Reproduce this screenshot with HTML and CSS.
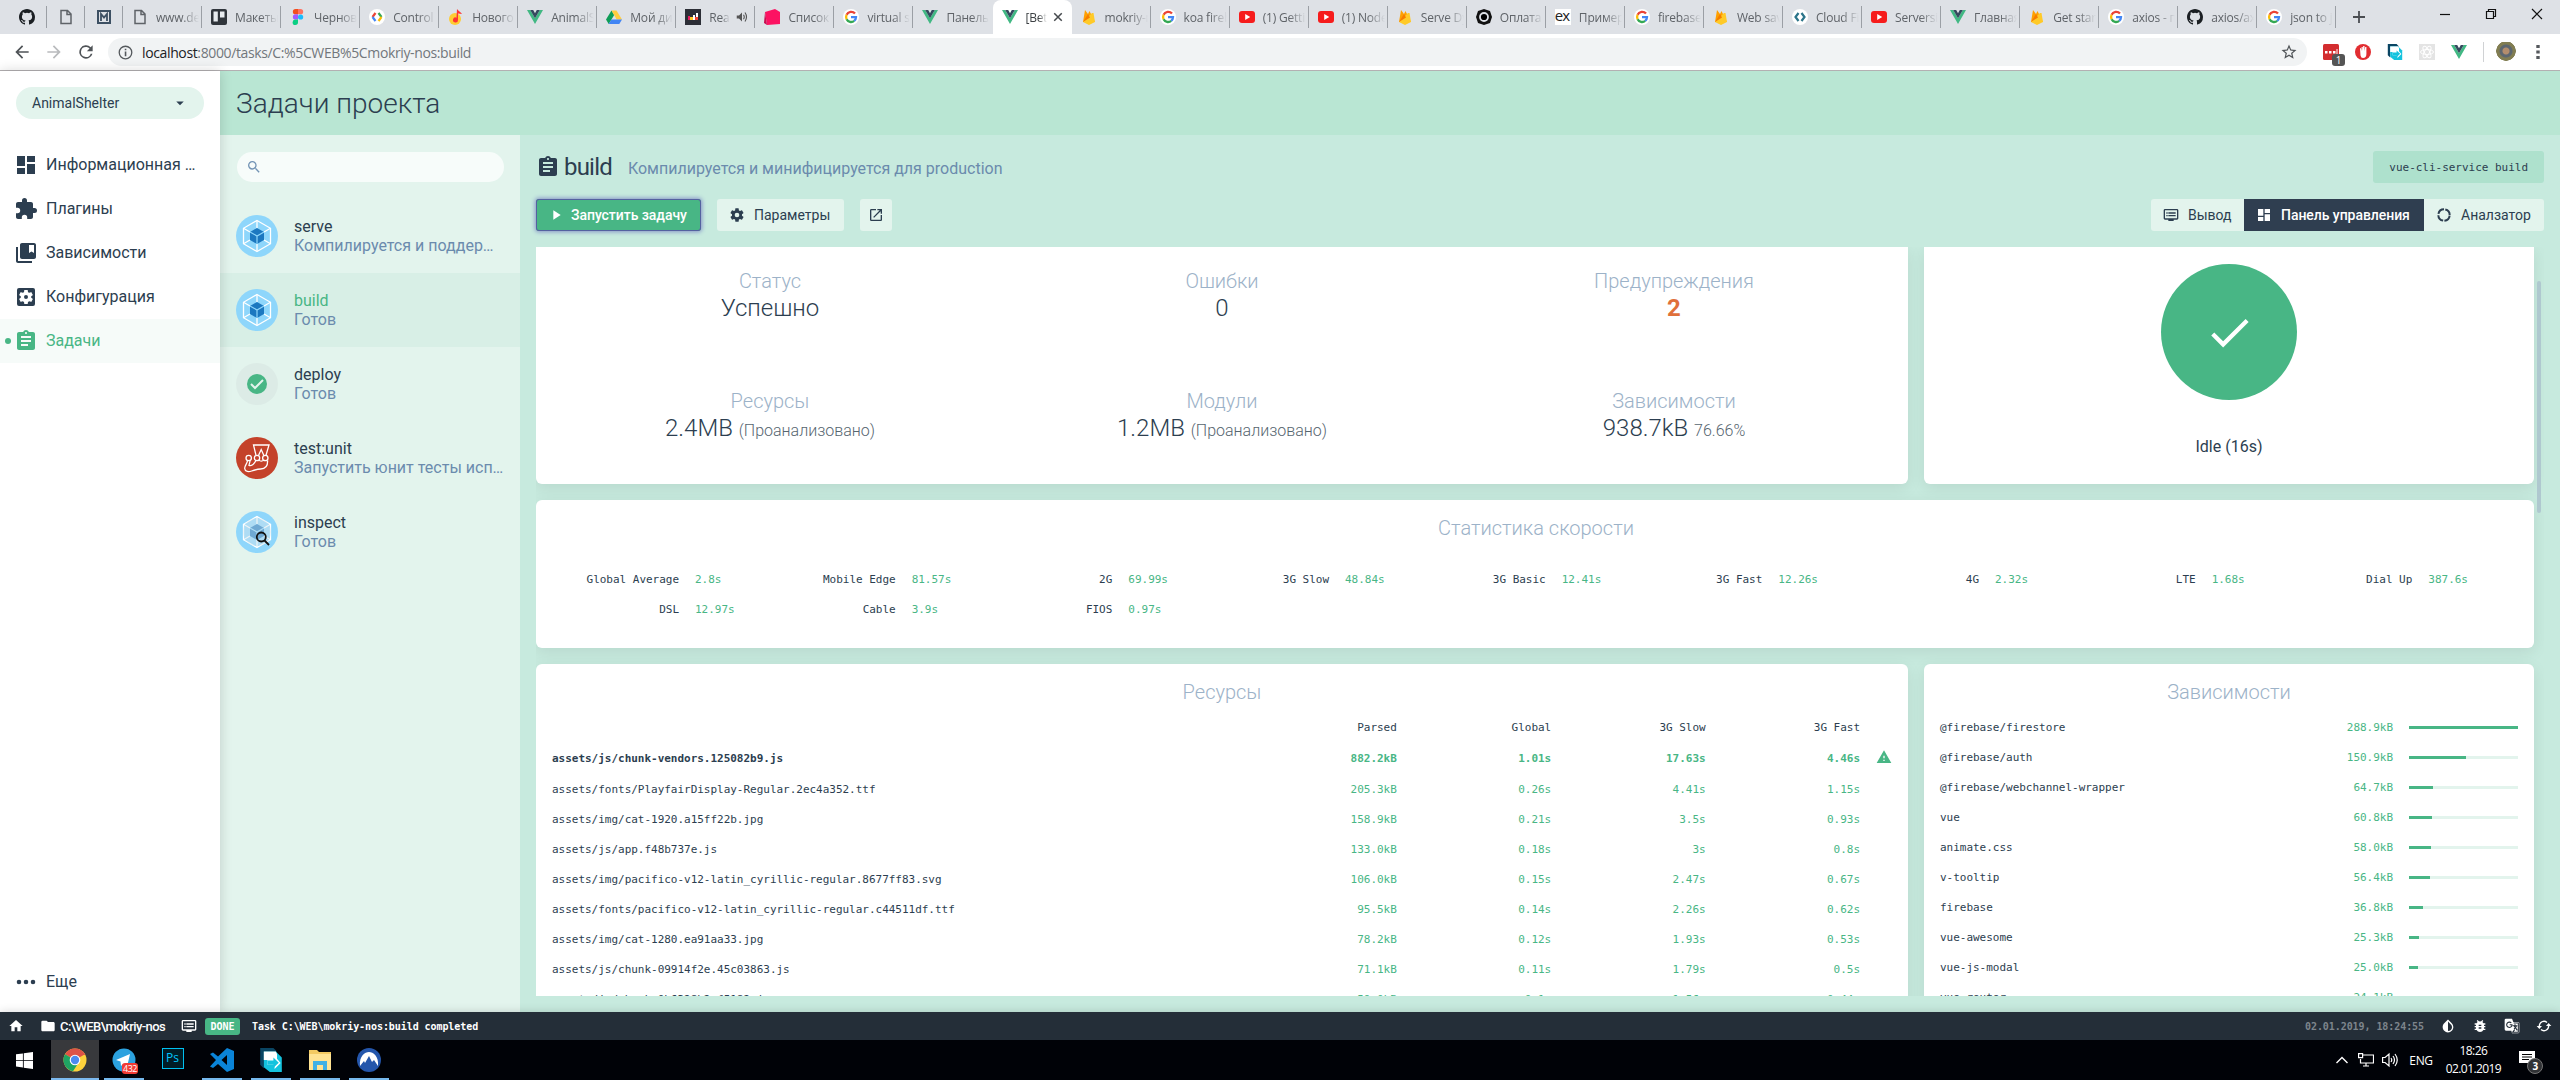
FILE: index.html
```html
<!DOCTYPE html>
<html lang="ru">
<head>
<meta charset="utf-8">
<title>[Beta] Vue CLI</title>
<link rel="stylesheet" href="styles.css">
</head>
<body>
<svg class="defs" width="0" height="0">
  <symbol id="github" viewBox="0 0 16 16"><path fill="#1b1f23" d="M8 0C3.58 0 0 3.58 0 8c0 3.54 2.29 6.53 5.47 7.59.4.07.55-.17.55-.38 0-.19-.01-.82-.01-1.49-2.01.37-2.53-.49-2.69-.94-.09-.23-.48-.94-.82-1.13-.28-.15-.68-.52-.01-.53.63-.01 1.08.58 1.23.82.72 1.21 1.87.87 2.33.66.07-.52.28-.87.51-1.07-1.78-.2-3.64-.89-3.64-3.95 0-.87.31-1.59.82-2.15-.08-.2-.36-1.02.08-2.12 0 0 .67-.21 2.2.82a7.7 7.7 0 0 1 4 0c1.53-1.04 2.2-.82 2.2-.82.44 1.1.16 1.92.08 2.12.51.56.82 1.27.82 2.15 0 3.07-1.87 3.75-3.65 3.95.29.25.54.73.54 1.48 0 1.07-.01 1.93-.01 2.2 0 .21.15.46.55.38A8 8 0 0 0 16 8c0-4.42-3.58-8-8-8z"/></symbol>
  <symbol id="doc" viewBox="0 0 16 16"><path fill="none" stroke="#5f6368" stroke-width="1.5" d="M3 1.5h6.5L13 5v9.5H3zM9 1.5V5.500h4"/></symbol>
  <symbol id="vue" viewBox="0 0 16 16"><path fill="#41b883" d="M0 1h3.200L8 9.300 12.800 1H16L8 15z"/><path fill="#35495e" d="M3.200 1h3L8 4.200 9.800 1h3L8 9.300z"/></symbol>
  <symbol id="google" viewBox="0 0 16 16"><circle cx="8" cy="8" r="8" fill="#fff"/><g fill="none" stroke-width="2.300"><path stroke="#ea4335" d="M12 4.600A5 5 0 0 0 3.600 5.800"/><path stroke="#fbbc05" d="M3.600 5.800a5 5 0 0 0 0 4.400"/><path stroke="#34a853" d="M3.600 10.200a5 5 0 0 0 7.600 1.700"/><path stroke="#4285f4" d="M11.200 11.900A5 5 0 0 0 13 8.200H8"/></g></symbol>
  <symbol id="fire" viewBox="0 0 16 16"><path fill="#ffa000" d="M2 13 4 1l3 4 1.500-3L14 13z"/><path fill="#ffca28" d="m2 13 9-9 1.500 0L14 13l-6 3z"/><path fill="#f57c00" d="M2 13 7 5l2 3.500z"/></symbol>
  <symbol id="youtube" viewBox="0 0 16 16"><rect y="2" width="16" height="12" rx="3" fill="#f61c1c"/><path fill="#fff" d="m6.200 5 5 3-5 3z"/></symbol>
  <symbol id="figma" viewBox="0 0 16 16"><path fill="#f24e1e" d="M8 0H5.500a2.600 2.600 0 0 0 0 5.300H8z"/><path fill="#ff7262" d="M8 0h2.500a2.600 2.600 0 0 1 0 5.300H8z"/><path fill="#a259ff" d="M8 5.300H5.500a2.600 2.600 0 0 0 0 5.300H8z"/><circle cx="10.600" cy="8" r="2.600" fill="#1abcfe"/><path fill="#0acf83" d="M8 10.600H5.500A2.700 2.700 0 1 0 8 13.300z"/></symbol>
  <symbol id="devs" viewBox="0 0 16 16"><circle cx="8" cy="8" r="8" fill="#fff"/><g fill="none" stroke-width="2.200"><path stroke="#ea4335" d="M6.500 4 3.500 8"/><path stroke="#4285f4" d="m3.500 8 3 4"/><path stroke="#34a853" d="m9.500 4 3 4"/><path stroke="#fbbc05" d="m12.500 8-3 4"/></g></symbol>
  <symbol id="cloud" viewBox="0 0 16 16"><circle cx="8" cy="8" r="8" fill="#fff"/><path fill="none" stroke="#2b7489" stroke-width="2.200" d="M6.500 4 3.500 8l3 4m3-8 3 4-3 4"/></symbol>
  <symbol id="dash" viewBox="0 0 24 24"><path fill="currentColor" d="M3 13h8V3H3v10zm0 8h8v-6H3v6zm10 0h8V11h-8v10zm0-18v6h8V3h-8z"/></symbol>
  <symbol id="clip" viewBox="0 0 24 24"><path fill="currentColor" d="M19 3h-4.180C14.400 1.840 13.300 1 12 1c-1.300 0-2.400.840-2.820 2H5c-1.100 0-2 .900-2 2v14c0 1.100.900 2 2 2h14c1.100 0 2-.900 2-2V5c0-1.100-.900-2-2-2zm-7 0c.550 0 1 .450 1 1s-.450 1-1 1-1-.450-1-1 .450-1 1-1zm2 14H7v-2h7v2zm3-4H7v-2h10v2zm0-4H7V7h10v2z"/></symbol>
  <symbol id="search" viewBox="0 0 24 24"><path fill="currentColor" d="M15.500 14h-.790l-.280-.270A6.471 6.471 0 0 0 16 9.500 6.500 6.500 0 1 0 9.500 16c1.610 0 3.090-.590 4.230-1.570l.270.280v.790l5 4.990L20.490 19l-4.990-5zm-6 0C7.010 14 5 11.990 5 9.500S7.010 5 9.500 5 14 7.010 14 9.500 11.990 14 9.500 14z"/></symbol>
  <symbol id="log" viewBox="0 0 24 24"><path fill="currentColor" d="M21 3H3c-1.100 0-2 .900-2 2v12c0 1.100.900 2 2 2h5v2h8v-2h5c1.100 0 2-.900 2-2V5c0-1.100-.900-2-2-2zm0 14H3V5h18v12zm-2-9H8v2h11V8zm0 4H8v2h11v-2zM7 8H5v2h2V8zm0 4H5v2h2v-2z"/></symbol>
  <symbol id="check" viewBox="0 0 24 24"><path fill="currentColor" d="M9 16.170 4.830 12l-1.420 1.410L9 19 21 7l-1.410-1.410z"/></symbol>
  <symbol id="webpack" viewBox="0 0 42 42"><circle cx="21" cy="21" r="21" fill="#8ed6fb"/><g stroke="#fff" stroke-width="1.300" fill="none"><path d="m21 5.500 13.500 7.800v15.400L21 36.500 7.500 28.700V13.300z"/><path d="M21 5.500V13m13.500.300L28 17m6.500 11.700L28 25m-7 11.500V29M7.500 28.700 14 25M7.500 13.300 14 17"/></g><path fill="#1c78c0" d="m21 13 7 4v8l-7 4-7-4v-8z"/><path fill="none" stroke="#8ed6fb" stroke-width="1.200" d="m14 17 7 4 7-4m-7 4v8"/></symbol>
  <symbol id="paste" viewBox="0 0 20 20"><path fill="#0a4563" d="M1 0h11l3 3H4v14l-3-3z"/><path fill="#14c3de" d="M4 3h10l5 5v12H9l-5-4z"/><path fill="#fff" d="M4 3h10l1 2v4l3 3.500-5 5V14H7v-4H4z"/><path fill="#14c3de" d="M7 10.500h5V8l4.500 4.200-4.500 4.300V14H7z"/></symbol>
</svg>

<div class="screen">
  <header class="tabs">
    <div class="tab pin p1"><svg><use href="#github"/></svg></div>
    <div class="tab pin"><svg><use href="#doc"/></svg></div>
    <div class="tab pin"><svg viewBox="0 0 16 16"><path fill="none" stroke="#3d5063" stroke-width="2" d="M2 2h12v12H2z"/><path fill="none" stroke="#3d5063" stroke-width="1.800" d="M5 12V5l3 3.500L11 5v7"/></svg></div>
    <div class="tab"><svg><use href="#doc"/></svg><span>www.des</span></div>
    <div class="tab"><svg viewBox="0 0 16 16"><rect width="16" height="16" rx="2" fill="#30353b"/><path fill="#e8ecef" d="M2.500 2.500h4.300v10H2.500zM9 2.500h4.500v6H9z"/></svg><span>Макеты</span></div>
    <div class="tab"><svg><use href="#figma"/></svg><span>Чернови</span></div>
    <div class="tab"><svg><use href="#devs"/></svg><span>Control f</span></div>
    <div class="tab"><svg viewBox="0 0 16 16"><circle cx="7" cy="10" r="6" fill="#fc3"/><path fill="#f33" d="M9 0c1 2 4 3 5 5l-4-.500V11a2.500 2.500 0 1 1-1.500-2.300z"/></svg><span>Нового</span></div>
    <div class="tab"><svg><use href="#vue"/></svg><span>AnimalSh</span></div>
    <div class="tab"><svg viewBox="0 0 16 16"><path fill="#0f9d58" d="M5.500 1.500 0 10.500l2.700 4.500L8.200 6z"/><path fill="#ffcd40" d="M5.500 1.500h5l5.500 9h-5.300z"/><path fill="#4285f4" d="M5.300 10.500H16L13.300 15H2.700z"/></svg><span>Мой дис</span></div>
    <div class="tab"><svg viewBox="0 0 16 16"><path fill="#2c2e36" d="M0 0h16v16H0z"/><path fill="#e91e63" d="M3 7h2v4H3z"/><path fill="#ffca28" d="M5 8h3v3H5z"/><path fill="#fff" d="M8 6h2v5H8zM11 4h2v4h-2z"/><path fill="#f44336" d="M10 8h3v3h-3z"/></svg><span class="short">Reac</span><svg class="audio" viewBox="0 0 16 16"><path fill="#555" d="M1 6h3l4-4v12l-4-4H1z"/><path fill="none" stroke="#555" stroke-width="1.500" d="M10 5q2 3 0 6m2-9q4 6 0 12"/></svg></div>
    <div class="tab"><svg viewBox="0 0 16 16"><path fill="#fc1262" d="m1 3 10-3 5 3v12l-13 1z"/><path fill="#c80d50" d="m1 3 2 13-3-2z"/></svg><span>Список</span></div>
    <div class="tab"><svg><use href="#google"/></svg><span>virtual s</span></div>
    <div class="tab noline"><svg><use href="#vue"/></svg><span>Панель</span></div>
    <div class="tab active"><svg><use href="#vue"/></svg><span class="short">[Beta</span><svg class="close" viewBox="0 0 16 16"><path stroke="#45494d" stroke-width="2" d="m3 3 10 10m0-10L3 13"/></svg></div>
    <div class="tab"><svg><use href="#fire"/></svg><span>mokriy-n</span></div>
    <div class="tab"><svg><use href="#google"/></svg><span>koa fireb</span></div>
    <div class="tab"><svg><use href="#youtube"/></svg><span>(1) Getti</span></div>
    <div class="tab"><svg><use href="#youtube"/></svg><span>(1) Node</span></div>
    <div class="tab"><svg><use href="#fire"/></svg><span>Serve Dy</span></div>
    <div class="tab"><svg viewBox="0 0 16 16"><path fill="#111" d="m8 0 6 2 2 6-2 6-6 2-6-2-2-6 2-6z"/><circle cx="8" cy="8" r="4" stroke="#dee1e6" stroke-width="1.800"/></svg><span>Оплата</span></div>
    <div class="tab"><b class="ex">ex</b><span>Пример</span></div>
    <div class="tab"><svg><use href="#google"/></svg><span>firebase</span></div>
    <div class="tab"><svg><use href="#fire"/></svg><span>Web sav</span></div>
    <div class="tab"><svg><use href="#cloud"/></svg><span>Cloud Fi</span></div>
    <div class="tab"><svg><use href="#youtube"/></svg><span>Serversi</span></div>
    <div class="tab"><svg><use href="#vue"/></svg><span>Главная</span></div>
    <div class="tab"><svg><use href="#fire"/></svg><span>Get star</span></div>
    <div class="tab"><svg><use href="#google"/></svg><span>axios - п</span></div>
    <div class="tab"><svg><use href="#github"/></svg><span>axios/ax</span></div>
    <div class="tab"><svg><use href="#google"/></svg><span>json to j</span></div>
    <svg class="plus" viewBox="0 0 14 14"><path stroke="#4a4d51" stroke-width="1.800" d="M7 1v12M1 7h12"/></svg>
    <div class="winbtns">
      <svg viewBox="0 0 12 12"><path stroke="#111" stroke-width="1.200" d="M1 6.500h10"/></svg>
      <svg viewBox="0 0 12 12"><path fill="none" stroke="#111" stroke-width="1.200" d="M1.500 3.500h7v7h-7zm2-.500V1.500h7v7H9"/></svg>
      <svg viewBox="0 0 12 12"><path stroke="#111" stroke-width="1.200" d="m1 1 10 10m0-10L1 11"/></svg>
    </div>
  </header>

  <div class="toolbar">
    <svg class="nav" viewBox="0 0 24 24"><path fill="#4f5357" d="M20 11H7.830l5.590-5.590L12 4l-8 8 8 8 1.410-1.410L7.830 13H20z"/></svg>
    <svg class="nav" viewBox="0 0 24 24"><path fill="#b9bbbd" d="m12 4-1.410 1.410L16.170 11H4v2h12.170l-5.580 5.590L12 20l8-8z"/></svg>
    <svg class="nav" viewBox="0 0 24 24"><path fill="#4f5357" d="M17.650 6.350A8 8 0 1 0 19.730 14h-2.080A6 6 0 1 1 12 6c1.660 0 3.140.690 4.220 1.780L13 11h7V4z"/></svg>
    <div class="omni">
      <svg class="info" viewBox="0 0 16 16"><circle cx="8" cy="8" r="6.700" fill="none" stroke="#55595d" stroke-width="1.400"/><path fill="#55595d" d="M7.200 7h1.700v5H7.200zm0-3h1.700v1.700H7.200z"/></svg>
      <span class="url"><b>localhost</b>:8000/tasks/C:%5CWEB%5Cmokriy-nos:build</span>
      <svg class="star" viewBox="0 0 24 24"><path fill="#4f5357" d="m22 9.240-7.190-.620L12 2 9.190 8.630 2 9.240l5.460 4.730L5.820 21 12 17.270 18.180 21l-1.630-7.030zM12 15.400l-3.760 2.270 1-4.280-3.320-2.880 4.380-.380L12 6.100l1.710 4.040 4.380.380-3.320 2.880 1 4.280z"/></svg>
    </div>
    <div class="exts">
      <span class="lastpass"><svg viewBox="0 0 16 16"><rect width="16" height="16" rx="1.500" fill="#d32d2f"/><path fill="#fff" d="M2 7h2.500v2.500H2zm4 0h2.500v2.500H6zm4 0h2.500v2.500H10zM13.500 5h1v6h-1z"/></svg><i>1</i></span>
      <svg viewBox="0 0 16 16"><circle cx="8" cy="8" r="8" fill="#e22d31"/><path fill="#fff" d="M5 4.500 6 4l.600 3V3h1.200v4L8.200 2h1.300v5l.700-4h1.200v7q0 4-3.400 4-2 0-2.500-2.500z"/></svg>
      <svg><use href="#paste"/></svg>
      <svg viewBox="0 0 16 16"><path fill="#e4e4e4" d="M0 0h16v16H0z"/><g fill="none" stroke="#fff"><ellipse cx="8" cy="8" rx="6.500" ry="2.500"/><ellipse cx="8" cy="8" rx="6.500" ry="2.500" transform="rotate(60 8 8)"/><ellipse cx="8" cy="8" rx="6.500" ry="2.500" transform="rotate(120 8 8)"/></g></svg>
      <svg><use href="#vue"/></svg>
    </div>
    <span class="avatar"></span>
    <svg class="menu" viewBox="0 0 16 16"><path fill="#55595d" d="M6.300 1h3.400v3H6.300zm0 5.500h3.400v3H6.300zm0 5.500h3.400v3H6.300z"/></svg>
  </div>

  <div class="app">
    <aside class="side">
      <div class="project">AnimalShelter<svg viewBox="0 0 24 24"><path fill="currentColor" d="m7 10 5 5 5-5z"/></svg></div>
      <nav>
        <a><svg><use href="#dash"/></svg><span>Информационная панель</span></a>
        <a><svg viewBox="0 0 24 24"><path fill="currentColor" d="M20.500 11H19V7c0-1.100-.900-2-2-2h-4V3.500a2.500 2.500 0 0 0-5 0V5H4c-1.100 0-1.990.900-1.990 2v3.800H3.500a2.700 2.700 0 0 1 0 5.400H2V20c0 1.100.900 2 2 2h3.800v-1.500a2.700 2.700 0 0 1 5.400 0V22H17c1.100 0 2-.900 2-2v-4h1.500a2.500 2.500 0 0 0 0-5z"/></svg><span>Плагины</span></a>
        <a><svg viewBox="0 0 24 24"><path fill="currentColor" d="M4 6H2v14c0 1.100.900 2 2 2h14v-2H4V6zm16-4H8c-1.100 0-2 .900-2 2v12c0 1.100.900 2 2 2h12c1.100 0 2-.900 2-2V4c0-1.100-.900-2-2-2zm0 10-2.500-1.500L15 12V4h5v8z"/></svg><span>Зависимости</span></a>
        <a><svg viewBox="0 0 24 24"><path fill="currentColor" d="M12 10a2 2 0 1 0 0 4 2 2 0 0 0 0-4zm7-7H5a2 2 0 0 0-2 2v14a2 2 0 0 0 2 2h14a2 2 0 0 0 2-2V5a2 2 0 0 0-2-2zm-1.750 9c0 .230-.020.460-.050.680l1.480 1.160c.130.110.170.300.080.450l-1.400 2.420c-.090.150-.270.210-.430.150l-1.740-.700c-.360.280-.760.510-1.180.690l-.260 1.850c-.030.170-.180.300-.350.300h-2.800c-.170 0-.320-.130-.350-.290l-.260-1.850c-.430-.180-.820-.410-1.180-.690l-1.740.700c-.160.060-.340 0-.430-.150l-1.400-2.420a.350.350 0 0 1 .080-.450l1.480-1.160a6 6 0 0 1 0-1.370l-1.480-1.160a.350.350 0 0 1-.080-.450l1.400-2.420c.090-.150.270-.210.430-.150l1.740.700c.360-.280.760-.510 1.180-.690l.260-1.850c.030-.170.180-.300.350-.300h2.800c.170 0 .320.130.350.290l.260 1.850c.430.180.820.410 1.180.690l1.740-.700c.160-.060.340 0 .430.150l1.400 2.420c.090.150.050.340-.080.450l-1.480 1.160c.030.230.050.460.050.690z"/></svg><span>Конфигурация</span></a>
        <a class="on"><svg><use href="#clip"/></svg><span>Задачи</span></a>
      </nav>
      <a class="more"><svg viewBox="0 0 24 24"><path fill="currentColor" d="M5 9.700a2.300 2.300 0 1 0 0 4.600 2.300 2.300 0 0 0 0-4.600zm14 0a2.300 2.300 0 1 0 0 4.600 2.300 2.300 0 0 0 0-4.600zm-7 0a2.300 2.300 0 1 0 0 4.600 2.300 2.300 0 0 0 0-4.600z"/></svg><span>Еще</span></a>
    </aside>

    <div class="view">
      <h1>Задачи проекта</h1>
      <div class="body">
        <section class="list">
          <div class="find"><svg><use href="#search"/></svg></div>
          <div class="task"><svg><use href="#webpack"/></svg><p>serve<small>Компилируется и поддерживает горячую перезагрузку</small></p></div>
          <div class="task on"><svg><use href="#webpack"/></svg><p>build<small>Готов</small></p></div>
          <div class="task"><svg viewBox="0 0 42 42"><circle cx="21" cy="21" r="21" fill="#dcebe6"/><circle cx="21" cy="21" r="10" fill="#48b685"/><path fill="none" stroke="#e3f4ed" stroke-width="2" d="m15 21 4 4 8-8"/></svg><p>deploy<small>Готов</small></p></div>
          <div class="task"><svg viewBox="0 0 42 42"><circle cx="21" cy="21" r="21" fill="#c4422a"/><g fill="none" stroke="#fff" stroke-width="1.300"><path d="M20 18.300 17.500 8H33l-3 10.300M22.500 18.500l2.700-6 2.700 6"/><circle cx="12.700" cy="21" r="2.700"/><circle cx="21" cy="21" r="2.700"/><circle cx="29.300" cy="21" r="2.700"/><path d="M11.500 23.500c0 3-3 5-2.800 8 .300 3.500 4 3.500 7 2.500s6-2 9-2c5 0 7-3.500 7-8.500M14 23.500c0 2.500-1 3.500-1 5 3 1 5.500-2.500 7-5M23 23c1 1.500 3.500 1.500 4.500 0"/></g></svg><p>test:unit<small>Запустить юнит тесты используя Jest</small></p></div>
          <div class="task"><svg viewBox="0 0 42 42"><use href="#webpack"/><circle cx="21" cy="21" r="14" fill="#d5e4ea" opacity=".450"/><g fill="none" stroke="#111" stroke-width="1.800"><circle cx="25.300" cy="26" r="4.500"/><path d="m28.500 29.500 4.500 4.500"/></g></svg><p>inspect<small>Готов</small></p></div>
        </section>

        <main class="detail">
          <div class="heading">
            <svg><use href="#clip"/></svg><h2>build</h2><span>Компилируется и минифицируется для production</span>
            <code>vue-cli-service build</code>
          </div>
          <div class="actions">
            <button class="run"><svg viewBox="0 0 24 24"><path fill="currentColor" d="M8 5v14l11-7z"/></svg>Запустить задачу</button>
            <button class="params"><svg viewBox="0 0 24 24"><path fill="currentColor" d="M19.430 12.980c.040-.320.070-.640.070-.980s-.030-.660-.070-.980l2.110-1.650c.190-.150.240-.420.120-.640l-2-3.460c-.120-.220-.390-.300-.610-.220l-2.490 1c-.520-.400-1.080-.730-1.690-.980l-.380-2.650A.488.488 0 0 0 14 2h-4c-.250 0-.460.180-.490.420l-.380 2.650c-.610.250-1.170.590-1.690.980l-2.490-1c-.230-.090-.490 0-.610.220l-2 3.460c-.130.220-.070.490.120.640l2.110 1.650c-.040.320-.070.650-.070.980s.030.660.070.980l-2.110 1.650c-.190.150-.240.420-.120.640l2 3.460c.120.220.390.300.610.220l2.490-1c.520.400 1.080.730 1.690.980l.380 2.650c.030.240.240.420.490.420h4c.250 0 .460-.180.490-.420l.380-2.650c.610-.250 1.170-.590 1.690-.980l2.490 1c.230.090.490 0 .610-.220l2-3.460c.120-.220.070-.490-.120-.640l-2.110-1.650zM12 15.500a3.500 3.500 0 1 1 0-7 3.500 3.500 0 0 1 0 7z"/></svg>Параметры</button>
            <button class="open"><svg viewBox="0 0 24 24"><path fill="currentColor" d="M19 19H5V5h7V3H5a2 2 0 0 0-2 2v14a2 2 0 0 0 2 2h14c1.100 0 2-.900 2-2v-7h-2v7zM14 3v2h3.590l-9.830 9.830 1.410 1.410L19 6.410V10h2V3h-7z"/></svg></button>
            <div class="group">
              <button class="g1"><svg><use href="#log"/></svg>Вывод</button>
              <button class="g2"><svg><use href="#dash"/></svg>Панель управления</button>
              <button class="g3"><svg viewBox="0 0 24 24"><circle cx="12" cy="12" r="8.500" fill="none" stroke="currentColor" stroke-width="3" stroke-dasharray="11.350 2" stroke-dashoffset="-1"/></svg>Аналзатор</button>
            </div>
          </div>

          <div class="scroll">
            <div class="row top">
              <div class="card stats">
                <div><h3>Статус</h3><p>Успешно</p></div>
                <div><h3>Ошибки</h3><p>0</p></div>
                <div><h3>Предупреждения</h3><p class="warn">2</p></div>
                <div><h3>Ресурсы</h3><p>2.4MB <small>(Проанализовано)</small></p></div>
                <div><h3>Модули</h3><p>1.2MB <small>(Проанализовано)</small></p></div>
                <div><h3>Зависимости</h3><p>938.7kB <small>76.66%</small></p></div>
              </div>
              <div class="card idle"><div class="disc"><svg><use href="#check"/></svg></div><p>Idle (16s)</p></div>
            </div>
            <div class="card speed">
              <h3>Статистика скорости</h3>
              <dl>
                <div><dt>Global Average</dt><dd>2.8s</dd></div>
                <div><dt>Mobile Edge</dt><dd>81.57s</dd></div>
                <div><dt>2G</dt><dd>69.99s</dd></div>
                <div><dt>3G Slow</dt><dd>48.84s</dd></div>
                <div><dt>3G Basic</dt><dd>12.41s</dd></div>
                <div><dt>3G Fast</dt><dd>12.26s</dd></div>
                <div><dt>4G</dt><dd>2.32s</dd></div>
                <div><dt>LTE</dt><dd>1.68s</dd></div>
                <div><dt>Dial Up</dt><dd>387.6s</dd></div>
                <div><dt>DSL</dt><dd>12.97s</dd></div>
                <div><dt>Cable</dt><dd>3.9s</dd></div>
                <div><dt>FIOS</dt><dd>0.97s</dd></div>
              </dl>
            </div>
            <div class="row tables">
              <div class="card assets">
                <h3>Ресурсы</h3>
                <div class="tr th"><span></span><i>Parsed</i><i>Global</i><i>3G Slow</i><i>3G Fast</i></div>
                <div class="tr big"><span>assets/js/chunk-vendors.125082b9.js</span><i>882.2kB</i><i>1.01s</i><i>17.63s</i><i>4.46s</i><svg viewBox="0 0 24 24"><path fill="currentColor" d="M1 21h22L12 2 1 21zm12-3h-2v-2h2v2zm0-4h-2v-4h2v4z"/></svg></div>
                <div class="tr"><span>assets/fonts/PlayfairDisplay-Regular.2ec4a352.ttf</span><i>205.3kB</i><i>0.26s</i><i>4.41s</i><i>1.15s</i></div>
                <div class="tr"><span>assets/img/cat-1920.a15ff22b.jpg</span><i>158.9kB</i><i>0.21s</i><i>3.5s</i><i>0.93s</i></div>
                <div class="tr"><span>assets/js/app.f48b737e.js</span><i>133.0kB</i><i>0.18s</i><i>3s</i><i>0.8s</i></div>
                <div class="tr"><span>assets/img/pacifico-v12-latin_cyrillic-regular.8677ff83.svg</span><i>106.0kB</i><i>0.15s</i><i>2.47s</i><i>0.67s</i></div>
                <div class="tr"><span>assets/fonts/pacifico-v12-latin_cyrillic-regular.c44511df.ttf</span><i>95.5kB</i><i>0.14s</i><i>2.26s</i><i>0.62s</i></div>
                <div class="tr"><span>assets/img/cat-1280.ea91aa33.jpg</span><i>78.2kB</i><i>0.12s</i><i>1.93s</i><i>0.53s</i></div>
                <div class="tr"><span>assets/js/chunk-09914f2e.45c03863.js</span><i>71.1kB</i><i>0.11s</i><i>1.79s</i><i>0.5s</i></div>
                <div class="tr"><span>assets/js/chunk-0b6328b2.f5182.js</span><i>59.0kB</i><i>0.1s</i><i>1.56s</i><i>0.44s</i></div>
              </div>
              <div class="card deps">
                <h3>Зависимости</h3>
                <div class="tr"><span>@firebase/firestore</span><i>288.9kB</i><b><u style="width:100%"></u></b></div>
                <div class="tr"><span>@firebase/auth</span><i>150.9kB</i><b><u style="width:52.2%"></u></b></div>
                <div class="tr"><span>@firebase/webchannel-wrapper</span><i>64.7kB</i><b><u style="width:22.4%"></u></b></div>
                <div class="tr"><span>vue</span><i>60.8kB</i><b><u style="width:21%"></u></b></div>
                <div class="tr"><span>animate.css</span><i>58.0kB</i><b><u style="width:20.1%"></u></b></div>
                <div class="tr"><span>v-tooltip</span><i>56.4kB</i><b><u style="width:19.5%"></u></b></div>
                <div class="tr"><span>firebase</span><i>36.8kB</i><b><u style="width:12.7%"></u></b></div>
                <div class="tr"><span>vue-awesome</span><i>25.3kB</i><b><u style="width:8.8%"></u></b></div>
                <div class="tr"><span>vue-js-modal</span><i>25.0kB</i><b><u style="width:8.6%"></u></b></div>
                <div class="tr"><span>vue-router</span><i>24.1kB</i><b><u style="width:8.3%"></u></b></div>
              </div>
            </div>
            <div class="thumb"></div>
          </div>
        </main>
      </div>
    </div>
  </div>

  <footer class="status">
    <svg class="home" viewBox="0 0 24 24"><path fill="currentColor" d="M10 20v-6h4v6h5v-8h3L12 3 2 12h3v8z"/></svg>
    <svg class="folder" viewBox="0 0 24 24"><path fill="currentColor" d="M10 4H4a2 2 0 0 0-2 2v12c0 1.100.900 2 2 2h16c1.100 0 2-.900 2-2V8c0-1.100-.900-2-2-2h-8z"/></svg>
    <span class="path">C:\WEB\mokriy-nos</span>
    <svg class="logi"><use href="#log"/></svg>
    <span class="done">DONE</span>
    <code>Task C:\WEB\mokriy-nos:build completed</code>
    <time>02.01.2019, 18:24:55</time>
    <div class="tools">
      <svg viewBox="0 0 24 24"><path fill="currentColor" d="M17.660 8 12 2.350 6.340 8A8.020 8.020 0 0 0 4 13.640c0 2 .780 4.110 2.340 5.670a7.990 7.990 0 0 0 11.320 0C19.220 17.750 20 15.640 20 13.640S19.220 9.560 17.660 8zM6 14c.010-2 .620-3.270 1.760-4.400L12 5.270v14.400c-3.500 0-6-2.670-6-5.670z" transform="matrix(-1 0 0 1 24 0)"/></svg>
      <svg viewBox="0 0 24 24"><path fill="currentColor" d="M20 8h-2.810a5.985 5.985 0 0 0-1.820-1.960L17 4.410 15.590 3l-2.170 2.170a6.020 6.020 0 0 0-2.830 0L8.410 3 7 4.410l1.620 1.630C7.880 6.550 7.260 7.220 6.810 8H4v2h2.090c-.050.330-.090.660-.090 1v1H4v2h2v1c0 .340.040.670.090 1H4v2h2.810a6 6 0 0 0 10.380 0H20v-2h-2.090c.050-.330.090-.660.090-1v-1h2v-2h-2v-1c0-.340-.040-.670-.090-1H20V8zm-6 8h-4v-2h4v2zm0-4h-4v-2h4v2z"/></svg>
      <svg viewBox="0 0 24 24"><path fill="currentColor" d="M3 1h9l2 5h7a2 2 0 0 1 2 2v13a2 2 0 0 1-2 2h-9l-1-4H3a2 2 0 0 1-2-2V3a2 2 0 0 1 2-2z"/><path fill="none" stroke="#242e38" stroke-width="1.600" d="M11 7.500A4 4 0 1 0 12 10H8.500M14.500 7.500h7v14H13l3-4m-3-6h7m-3.500-2v2m2.500 0q-1 3-4 5m0-5 5 7"/></svg>
      <svg viewBox="0 0 24 24"><path fill="none" stroke="currentColor" stroke-width="2" d="M5 12a7 7 0 0 1 11.500-5.400M19 12a7 7 0 0 1-11.500 5.400"/><path fill="currentColor" d="M15 12h8l-4-4.500zM9 12H1l4 4.500z" transform="rotate(180 12 12)"/></svg>
    </div>
  </footer>

  <footer class="taskbar">
    <div class="tb win"><svg viewBox="0 0 16 16"><path fill="#fff" d="m0 2.200 6.500-.900v6.200H0zm7.300-1L16 0v7.500H7.300zM0 8.300h6.500v6.300L0 13.700zm7.300 0H16V16l-8.700-1.200z"/></svg></div>
    <div class="tb cur"><svg viewBox="0 0 24 24"><circle cx="12" cy="12" r="11.500" fill="#fdd23c"/><path fill="#de5347" d="M12 12 2 6.200A11.500 11.500 0 0 1 22 6.200z"/><path fill="#1fa463" d="M12 12 2 6.200a11.500 11.500 0 0 0 8 17.100L16 14z"/><path fill="#de5347" d="M12 7h10.300L22 6.200H12z"/><circle cx="12" cy="12" r="5.300" fill="#fff"/><circle cx="12" cy="12" r="4.200" fill="#4d8af0"/></svg></div>
    <div class="tb run1 tg"><svg viewBox="0 0 24 24"><circle cx="12" cy="12" r="11.500" fill="#2ca2df"/><path fill="#fff" d="m4 12 14-6-3 13-4-3-2 2-.500-4.500z"/></svg><i>432</i></div>
    <div class="tb"><span class="ps">Ps</span></div>
    <div class="tb run1"><svg viewBox="0 0 24 24"><path fill="#0a84d8" d="M17 0 24 3v18l-7 3-9-8-5 4-3-1.500L6 12 0 6l3-1.500 5 4zm0 7-5.500 5L17 17z"/></svg></div>
    <div class="tb run1"><svg><use href="#paste"/></svg></div>
    <div class="tb run1"><svg viewBox="0 0 24 24"><path fill="#f3ca62" d="M1 2h8l2 2h12v5H1z"/><path fill="#ffe392" d="M1 6h22v16H1z"/><path fill="#3fb1e4" d="M5 13h14v9h-4v-5H9v5H5z"/></svg></div>
    <div class="tb run1"><svg viewBox="0 0 24 24"><circle cx="12" cy="12" r="12" fill="#2456ab"/><path fill="#fff" d="M3 18C2 8 8 4 12 4s10 4 9 14l-4-6-2 2-3-6-4 7-1-2z"/></svg></div>
    <div class="tray">
      <svg class="chev" viewBox="0 0 12 12"><path fill="none" stroke="#fff" stroke-width="1.400" d="m.500 9 5.500-5.500L11.500 9"/></svg>
      <svg viewBox="0 0 16 16"><path fill="none" stroke="#fff" stroke-width="1.200" d="M5 3h10.500v8H2.500V7M8 11v3m-3 0h6M.600 1.600h4v4h-4z"/></svg>
      <svg viewBox="0 0 16 16"><path fill="none" stroke="#fff" stroke-width="1.200" d="M.600 5.500h2.500L7 2v12l-3.900-3.500H.600zM9 6q1.500 2 0 4m2-6q3 4 0 8m2-10q4.500 6 0 12"/></svg>
      <span class="lang">ENG</span>
      <span class="clock">18:26<br>02.01.2019</span>
      <span class="note"><svg viewBox="0 0 16 16"><path fill="#fff" d="M0 1h16v12h-4v3l-3-3H0z"/><path stroke="#000" d="M3 4.500h10M3 7h10M3 9.500h7"/></svg><i>3</i></span>
    </div>
  </footer>
</div>
</body>
</html>
```
FILE: styles.css
```css
* { box-sizing: border-box; }
body { margin: 0; }
h1, h2, h3, p, dl, dd { margin: 0; font-weight: 300; }
i, u { font-style: normal; text-decoration: none; }
svg { display: block; flex: none; }
.defs { position: absolute; }

.screen {
  width: 2560px;
  height: 1080px;
  display: flex;
  flex-direction: column;
  overflow: hidden;
  font-family: Roboto, "Open Sans", sans-serif;
  color: #2c3e50;
  background: #fff;
}

/* browser tabs */
.tabs {
  height: 34px;
  display: flex;
  align-items: stretch;
  background: #dee1e6;
  font: 12px "Open Sans", sans-serif;
  letter-spacing: -.2px;
  color: #5f6368;
}
.tab {
  width: 79.050px;
  flex: none;
  display: flex;
  align-items: center;
  padding-left: 9px;
  border-right: 1px solid transparent;
  border-image: linear-gradient(transparent 7px, #9b9fa5 7px, #9b9fa5 27px, transparent 27px) 1;
}
.tab svg { width: 16px; height: 16px; }
.tab.pin { width: 38px; padding-left: 11px; }
.tab.p1 { width: 47px; padding-left: 19px; }
.tab span {
  width: 43px;
  margin-left: 8px;
  overflow: hidden;
  white-space: nowrap;
  -webkit-mask: linear-gradient(90deg, #000 60%, transparent);
}
.tab span.short { width: 21px; }
.tab .audio { width: 12px; height: 12px; margin-left: 6px; }
.tab .close { width: 12px; height: 12px; margin-left: 5px; }
.tab.noline { border-image: none; }
.tab.active { border: 0; background: #fff; border-radius: 8px 8px 0 0; color: #3c4043; }
.ex { width: 16px; height: 16px; background: #fff; color: #222; font: 15px/13px "Open Sans"; letter-spacing: -1px; }
.plus { width: 14px; height: 14px; align-self: center; margin-left: 16px; }
.winbtns { display: flex; gap: 34px; margin-left: auto; padding: 8px 17px 0 0; }
.winbtns svg { width: 12px; height: 12px; }

/* address bar */
.toolbar { height: 37px; display: flex; align-items: center; border-bottom: 1px solid #b3b0b2; background: #fff; padding-left: 12px; }
.nav { width: 20px; height: 20px; margin-right: 12px; }
.omni { width: 2199px; height: 28px; border-radius: 14px; background: #f1f3f4; display: flex; align-items: center; padding: 0 9px 0 10px; }
.info { width: 15px; height: 15px; }
.url { margin-left: 9px; font: 14px "Open Sans", sans-serif; letter-spacing: -.370px; color: #72777c; }
.url b { font-weight: 400; color: #202124; }
.star { width: 18px; height: 18px; margin-left: auto; }
.exts { display: flex; gap: 16px; margin-left: 16px; }
.exts svg { width: 16px; height: 16px; }
.lastpass { position: relative; }
.lastpass i { position: absolute; left: 9px; top: 10px; width: 13px; height: 12px; border-radius: 3px; background: #555; color: #fff; font: 10px/12px "Open Sans"; text-align: center; }
.avatar { width: 37px; height: 20px; margin-left: 16px; border-left: 1px solid #d0d2d4; background: radial-gradient(circle at 22px 9px, #b38d6d 3px, #5d6770 4px 6px, #817d52 7px 9.500px, transparent 10px); }
.menu { width: 16px; height: 18px; margin-left: 10px; }

/* application */
.app { flex: 1; min-height: 0; display: flex; }
.side { width: 220px; display: flex; flex-direction: column; background: #fff; box-shadow: 0 0 12px rgba(0,0,0,.16); z-index: 1; font-size: 16px; }
.project { margin: 16px 16px 24px; height: 32px; border-radius: 16px; background: #e3f4ed; display: flex; align-items: center; justify-content: space-between; padding: 0 15px 0 16px; font-size: 14px; line-height: 30px; }
.project svg { width: 18px; height: 18px; }
.side a { height: 44px; display: flex; align-items: center; padding: 0 24px 0 14px; gap: 8px; }
.side a svg { width: 24px; height: 24px; }
.side a span { overflow: hidden; text-overflow: ellipsis; white-space: nowrap; line-height: 22px; }
.side a.on { background: #f6fbf9; color: #48b685; padding-left: 5px; }
.side a.on::before { content: ""; width: 6px; height: 6px; border-radius: 3px; background: #48b685; margin-right: -5px; }
.side .more { margin-top: auto; margin-bottom: 8px; }

.view { flex: 1; display: flex; flex-direction: column; background: #c7eade; }
h1 { height: 64px; padding-left: 16px; font-size: 28px; line-height: 65px; background: #b9e6d3; }
.body { flex: 1; min-height: 0; display: flex; }
.list { width: 300px; background: #e3f4ed; }
.find { width: 267px; height: 30px; margin: 17px 0 17px 17px; border-radius: 15px; background: #f7fcfa; color: #7394b5; padding: 7px 9px; }
.find svg { width: 16px; height: 16px; }
.task { height: 74px; display: flex; align-items: center; gap: 16px; padding: 0 16px; }
.task svg { width: 42px; height: 42px; }
.task p { font-size: 16px; font-weight: 400; line-height: 19px; min-width: 0; }
.task small { display: block; font-size: 16px; color: #6b8bad; overflow: hidden; text-overflow: ellipsis; white-space: nowrap; }
.task.on { background: #d8efe6; }
.task.on p { color: #48b685; }

.detail { flex: 1; min-width: 0; padding: 16px 16px 16px 16px; display: flex; flex-direction: column; }
.heading { height: 32px; display: flex; align-items: center; }
.heading svg { width: 24px; height: 24px; }
.heading h2 { font-size: 24px; font-weight: 400; margin-left: 4px; line-height: 30px; letter-spacing: -.8px; }
.heading span { color: #6b8bad; font-size: 16px; margin: 2px 0 0 16px; }
code, time, dl, .tr { font: 11px "DejaVu Sans Mono", monospace; letter-spacing: -.02px; }
.heading code { margin-left: auto; height: 32px; line-height: 34px; padding: 0 16px; border-radius: 3px; background: #aee1cd; }
.actions { display: flex; margin: 16px 0; gap: 16px; }
button { height: 32px; border: 0; border-radius: 3px; background: #e3f4ed; color: #2c3e50; font: 14px Roboto, sans-serif; display: flex; align-items: center; padding: 0; }
button svg { width: 16px; height: 16px; }
.run { width: 165px; background: #48b685; color: #fff; font-weight: 500; padding-left: 12px; gap: 7px; letter-spacing: -.05px; box-shadow: inset 0 0 0 1px #5561a0, 0 0 4px 1px #8794c8; }
.params { width: 127px; padding-left: 12px; gap: 9px; }
.open { width: 32px; justify-content: center; }
.group { display: flex; margin-left: auto; }
.g1 { width: 93px; padding-left: 12px; gap: 9px; border-radius: 3px 0 0 3px; }
.g2 { width: 180px; padding-left: 12px; gap: 9px; background: #2f3e50; color: #fff; border-radius: 0; font-weight: 500; letter-spacing: -.05px; }
.g3 { width: 120px; padding-left: 12px; gap: 9px; border-radius: 0 3px 3px 0; }

.scroll { position: relative; flex: 1; min-height: 0; overflow: hidden; display: flex; flex-direction: column; gap: 16px; padding-right: 10px; }
.card { background: #fff; border-radius: 6px; box-shadow: 0 4px 16px rgba(0,0,0,.08); }
.row { display: grid; grid-template-columns: 1372px 610px; gap: 16px; flex: none; }
.top { height: 237px; }
.top .card { border-radius: 0 0 6px 6px; }
.card h3 { text-align: center; color: #9cb2c8; font-size: 20px; line-height: 26px; }
.stats { display: grid; grid-template: 120px 117px / repeat(3, 1fr); padding: 0 8px; }
.stats > div { padding-top: 21px; text-align: center; }
.stats p { font-size: 24px; line-height: 28px; }
.stats small { font-size: 16px; color: #56656f; }
.stats p.warn { color: #e0703a; font-weight: 700; }
.idle { display: flex; flex-direction: column; align-items: center; padding-top: 17px; }
.disc { width: 136px; height: 136px; border-radius: 50%; background: #48b685; color: #fff; display: flex; align-items: center; justify-content: center; }
.disc svg { width: 51px; height: 51px; }
.disc path { stroke: currentColor; stroke-width: .4px; }
.idle p { font-size: 16px; font-weight: 400; margin-top: 37px; }
.speed { height: 148px; flex: none; padding: 15px 23px 15px 25px; }
.speed dl { display: grid; grid-template-columns: repeat(9, 1fr); margin-top: 24px; }
.speed dl div { display: grid; grid-template-columns: 118px 1fr; gap: 16px; line-height: 30px; }
dt { text-align: right; }
dd { color: #48b685; font-weight: 400; }
.tables { height: 420px; }
.tables .card { padding: 15px 16px 0; }
.tables h3 { margin-bottom: 7px; }
.tr { display: flex; height: 30px; line-height: 29px; align-items: center; }
.tr span { flex: 1; }
.assets .tr { padding-right: 32px; }
.assets i { width: 154.400px; text-align: right; color: #48b685; }
.assets .th i { color: #2c3e50; }
.assets .big { height: 32px; font-weight: 700; }
.big svg { width: 16px; height: 16px; color: #48b685; margin: -2px -32px 0 16px; }
.deps .tr i { color: #48b685; margin-right: 16px; }
.deps b { width: 109px; height: 3px; background: #e3f4ed; }
.deps u { display: block; height: 3px; background: #48b685; }
.thumb { position: absolute; right: 3px; top: 34px; width: 4px; height: 232px; border-radius: 2px; background: #afc8cf; }

/* status bar */
.status { position: relative; z-index: 2; height: 28px; display: flex; align-items: center; background: #242e38; color: #fff; padding: 0 8px; box-shadow: 0 0 10px rgba(0,0,0,.16); }
.status svg { width: 16px; height: 16px; }
.folder { margin: 0 4px 0 16px; }
.path { width: 121px; font-size: 13px; font-weight: 500; letter-spacing: -.6px; white-space: nowrap; }
.done { width: 35px; height: 17px; margin: 0 12px 0 8px; border-radius: 3px; background: #48b685; font: 700 10px/17px "DejaVu Sans Mono", monospace; text-align: center; }
.status code { font-size: 10px; font-weight: 700; letter-spacing: -.07px; }
.status time { margin-left: auto; font-size: 10px; font-weight: 700; letter-spacing: -.07px; color: #7d858c; }
.tools { display: flex; gap: 16px; margin-left: 16px; }

/* OS taskbar */
.taskbar { position: relative; z-index: 2; height: 40px; display: flex; background: #000207; color: #fff; font: 12px "Open Sans", sans-serif; }
.tb { width: 49px; display: flex; align-items: center; justify-content: center; border: 0 solid #7cb9ee; position: relative; }
.tb svg { width: 24px; height: 24px; }
.tb.win { width: 48px; margin-right: 3px; }
.tb.win svg { width: 17px; height: 17px; }
.tb.cur { width: 48px; background: #38393c; border-bottom-width: 2px; padding-top: 2px; }
.run1::after { content: ""; position: absolute; left: 5px; right: 4px; bottom: 0; height: 2px; background: #76b9ed; }
.tg i { position: absolute; left: 23px; top: 23px; width: 16px; height: 11px; border-radius: 3px; background: #f23c34; font-size: 9px; line-height: 11px; text-align: center; letter-spacing: -.5px; }
.ps { width: 22px; height: 21px; border: 1px solid #00c0f0; background: #001d26; color: #00c8ff; font: 12px/18px "Open Sans"; text-align: center; margin-bottom: 3px; }
.tray { margin-left: auto; display: flex; align-items: center; padding-right: 25px; letter-spacing: -.6px; }
.tray svg { width: 16px; height: 16px; margin-right: 8px; }
.tray .chev { width: 12px; height: 12px; margin-right: 10px; }
.lang { margin: 0 13px 0 3px; letter-spacing: -.3px; }
.clock { text-align: center; line-height: 18px; }
.note { position: relative; margin-left: 18px; }
.note svg { margin: -5px 0 0; }
.note i { position: absolute; left: 8px; top: 3px; width: 16px; height: 16px; border-radius: 8px; background: #303235; border: 1px solid #777; font: 700 10px/14px "Open Sans"; text-align: center; }
```
